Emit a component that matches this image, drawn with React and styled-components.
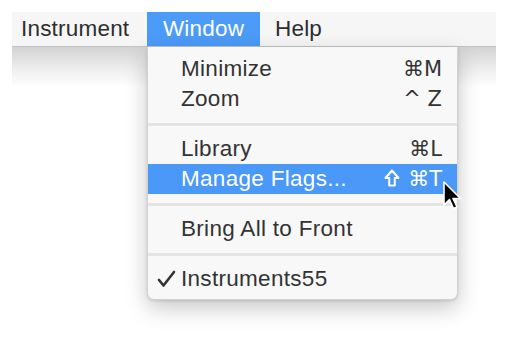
import React from "react";
import styled, { createGlobalStyle } from "styled-components";

const GlobalStyle = createGlobalStyle`
  html, body {
    margin: 0;
    padding: 0;
    background: #ffffff;
  }
  body {
    font-family: "Liberation Sans", Arial, "DejaVu Sans", sans-serif;
    -webkit-font-smoothing: antialiased;
  }
`;

const Stage = styled.div`
  position: relative;
  width: 508px;
  height: 341px;
  padding: 12px 12px 0 12px;
  box-sizing: border-box;
`;

const MenuBar = styled.div`
  display: flex;
  align-items: stretch;
  height: 35px;
  background: #f6f6f6;
  border-bottom: 1px solid #c4c4c4;
  box-sizing: border-box;
`;

const BarItem = styled.div`
  display: flex;
  align-items: center;
  justify-content: ${(p) => (p.$center ? "center" : "flex-start")};
  padding: 0 0 1px ${(p) => p.$padLeft ?? 15}px;
  font-size: 22.5px;
  color: ${(p) => (p.$active ? "#ffffff" : "#2e2e2e")};
  background: ${(p) => (p.$active ? "#4c9bf8" : "transparent")};
  width: ${(p) => (p.$width ? p.$width + "px" : "auto")};
  box-sizing: border-box;
  letter-spacing: 0.2px;
`;

const Shade = styled.div`
  height: 40px;
  background: linear-gradient(#d3d3d3, #eeeeee 55%, #ffffff);
`;

const Menu = styled.div`
  position: absolute;
  left: 147px;
  top: 47px;
  width: 311px;
  padding: 7px 0 5px;
  box-sizing: border-box;
  background: #f8f8f8;
  border: 1px solid #d2d2d2;
  border-top: none;
  border-radius: 0 0 7px 7px;
  box-shadow: 0 8px 22px rgba(0, 0, 0, 0.22), 0 1px 3px rgba(0, 0, 0, 0.12);
`;

const Row = styled.div`
  display: flex;
  align-items: center;
  height: 30px;
  padding: 0 15px 1px 0;
  box-sizing: border-box;
  font-size: 22.5px;
  letter-spacing: 0.3px;
  color: ${(p) => (p.$active ? "#ffffff" : "#333333")};
  background: ${(p) => (p.$active ? "#4a98f7" : "transparent")};
`;

const Check = styled.span`
  width: 33px;
  padding-left: 4px;
  box-sizing: border-box;
  display: flex;
  justify-content: center;
  align-items: center;
`;

const Label = styled.span`
  flex: 1;
`;

const Keys = styled.span`
  display: flex;
  align-items: center;
  font-family: "DejaVu Sans", "Liberation Sans", sans-serif;
  font-size: 21px;
  letter-spacing: 0;
  white-space: pre;
`;

const ShiftIcon = styled.svg`
  margin-right: 8px;
  margin-top: -1px;
`;

const Separator = styled.div`
  height: 20px;
  display: flex;
  align-items: center;
  &::after {
    content: "";
    display: block;
    width: 100%;
    height: 3px;
    background: #e4e4e4;
  }
`;

const Cursor = styled.svg`
  position: absolute;
  left: 442px;
  top: 181px;
`;

const items = [
  { label: "Minimize", keys: "⌘M" },
  { label: "Zoom", keys: "^ Z" },
  "sep",
  { label: "Library", keys: "⌘L" },
  { label: "Manage Flags...", keys: "⌘T", shift: true, active: true },
  "sep",
  { label: "Bring All to Front" },
  "sep",
  { label: "Instruments55", checked: true },
];

export default function App() {
  return (
    <>
      <GlobalStyle />
      <Stage>
        <MenuBar>
          <BarItem $padLeft={9} $width={135}>Instrument</BarItem>
          <BarItem $active $center $padLeft={0} $width={113}>Window</BarItem>
          <BarItem>Help</BarItem>
        </MenuBar>
        <Shade />
        <Menu>
          {items.map((it, i) =>
            it === "sep" ? (
              <Separator key={i} />
            ) : (
              <Row key={i} $active={it.active}>
                <Check>
                  {it.checked && (
                    <svg width="19" height="18" viewBox="0 0 19 18">
                      <path
                        d="M2 10 L6.5 15.5 L17 2"
                        fill="none"
                        stroke="#333"
                        strokeWidth="2.6"
                        strokeLinecap="round"
                        strokeLinejoin="round"
                      />
                    </svg>
                  )}
                </Check>
                <Label>{it.label}</Label>
                {it.keys && (
                  <Keys>
                    {it.shift && (
                      <ShiftIcon width="16" height="18" viewBox="0 0 16 18">
                        <path
                          d="M8 1.5 L14.5 9 L10.8 9 L10.8 16.5 L5.2 16.5 L5.2 9 L1.5 9 Z"
                          fill="none"
                          stroke="#fff"
                          strokeWidth="2"
                          strokeLinejoin="round"
                        />
                      </ShiftIcon>
                    )}
                    {it.keys}
                  </Keys>
                )}
              </Row>
            )
          )}
        </Menu>
        <Cursor width="22" height="32" viewBox="0 0 22 32">
          <path
            d="M2 1 L2 24 L7.5 18.5 L11.5 27.5 L15 26 L11 17.5 L18.5 17.5 Z"
            fill="#000"
            stroke="#fff"
            strokeWidth="1.6"
            strokeLinejoin="round"
          />
        </Cursor>
      </Stage>
    </>
  );
}
